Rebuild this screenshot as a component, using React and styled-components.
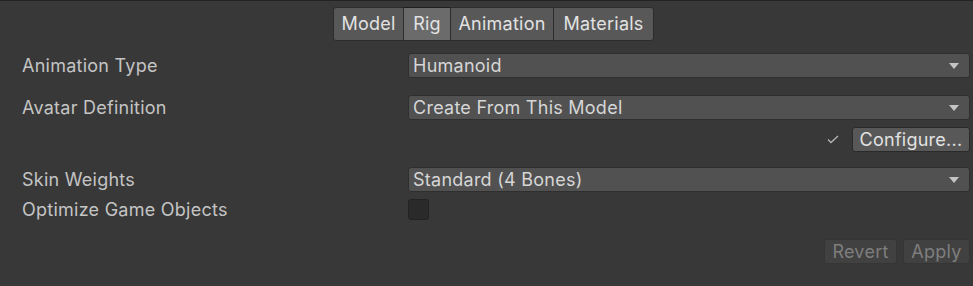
import React from "react";
import styled, { createGlobalStyle } from "styled-components";

const Global = createGlobalStyle`
  html, body { margin: 0; padding: 0; background: #383838; }
  body { font-family: Inter, "Noto Sans", sans-serif; letter-spacing: 0.25px; }
`;

const Page = styled.div`
  width: 973px;
  height: 286px;
  box-sizing: border-box;
  border-top: 1px solid #232323;
  background: #383838;
  overflow: hidden;
`;

const TabBar = styled.div`
  display: flex;
  justify-content: center;
  padding: 6px 0 0 14px;
`;

const Tab = styled.div`
  height: 34px;
  box-sizing: border-box;
  display: flex;
  align-items: center;
  justify-content: center;
  padding-bottom: 1px;
  width: ${(p) => p.$w}px;
  font-size: 18px;
  color: #e2e2e2;
  background: ${(p) => (p.$active ? "#6b6b6b" : "#585858")};
  border: 1px solid #2c2c2c;
  border-top-color: ${(p) => (p.$active ? "#1e1e1e" : "#2c2c2c")};
  margin-left: -1px;
  &:first-child { border-radius: 3px 0 0 3px; margin-left: 0; }
  &:last-child { border-radius: 0 3px 3px 0; }
`;

const Form = styled.div`
  padding: 12px 3px 0 22px;
`;

const Row = styled.div`
  display: grid;
  grid-template-columns: 386px 1fr;
  align-items: center;
  height: ${(p) => p.$h || 25}px;
  margin-top: ${(p) => p.$mt || 0}px;
`;

const Label = styled.div`
  font-size: 18px;
  color: #c4c4c4;
`;

const Dropdown = styled.div`
  height: 25px;
  box-sizing: border-box;
  display: flex;
  align-items: center;
  justify-content: space-between;
  padding: 0 10px 0 4px;
  background: #515151;
  border: 1px solid #2f2f2f;
  border-radius: 3px;
  font-size: 18px;
  color: #d6d6d6;
`;

const Arrow = styled.span`
  width: 0;
  height: 0;
  border-left: 5px solid transparent;
  border-right: 5px solid transparent;
  border-top: 6px solid #c4c4c4;
`;

const RightRow = styled.div`
  display: flex;
  justify-content: flex-end;
  align-items: center;
  gap: ${(p) => p.$gap || 6}px;
  height: 25px;
  margin-top: ${(p) => p.$mt || 0}px;
`;

const Button = styled.div`
  height: 25px;
  box-sizing: border-box;
  display: flex;
  align-items: center;
  justify-content: center;
  width: ${(p) => p.$w}px;
  font-size: 18px;
  border-radius: 3px;
  border: 1px solid ${(p) => (p.$disabled ? "#353535" : "#2a2a2a")};
  background: ${(p) => (p.$disabled ? "#414141" : "#585858")};
  color: ${(p) => (p.$disabled ? "#7e7e7e" : "#e2e2e2")};
`;

const Check = styled.svg`
  margin-right: 7px;
`;

const Checkbox = styled.div`
  width: 21px;
  height: 21px;
  box-sizing: border-box;
  background: #2a2a2a;
  border: 1px solid #222222;
  border-radius: 3px;
`;

export default function App() {
  return (
    <Page>
      <Global />
      <TabBar>
        <Tab $w={71}>Model</Tab>
        <Tab $w={48} $active>Rig</Tab>
        <Tab $w={104}>Animation</Tab>
        <Tab $w={101}>Materials</Tab>
      </TabBar>
      <Form>
        <Row>
          <Label>Animation Type</Label>
          <Dropdown>
            Humanoid
            <Arrow />
          </Dropdown>
        </Row>
        <Row $mt={17}>
          <Label>Avatar Definition</Label>
          <Dropdown>
            Create From This Model
            <Arrow />
          </Dropdown>
        </Row>
        <RightRow $mt={7} $gap={0}>
          <Check width="12" height="9" viewBox="0 0 12 9">
            <polyline points="1,4.5 4,7.5 11,1" fill="none" stroke="#b4b4b4" strokeWidth="1.3" />
          </Check>
          <Button $w={118}>Configure...</Button>
        </RightRow>
        <Row $mt={15}>
          <Label>Skin Weights</Label>
          <Dropdown>
            Standard (4 Bones)
            <Arrow />
          </Dropdown>
        </Row>
        <Row $mt={5} $h={24}>
          <Label>Optimize Game Objects</Label>
          <Checkbox />
        </Row>
        <RightRow $mt={18}>
          <Button $w={73} $disabled>Revert</Button>
          <Button $w={67} $disabled>Apply</Button>
        </RightRow>
      </Form>
    </Page>
  );
}
